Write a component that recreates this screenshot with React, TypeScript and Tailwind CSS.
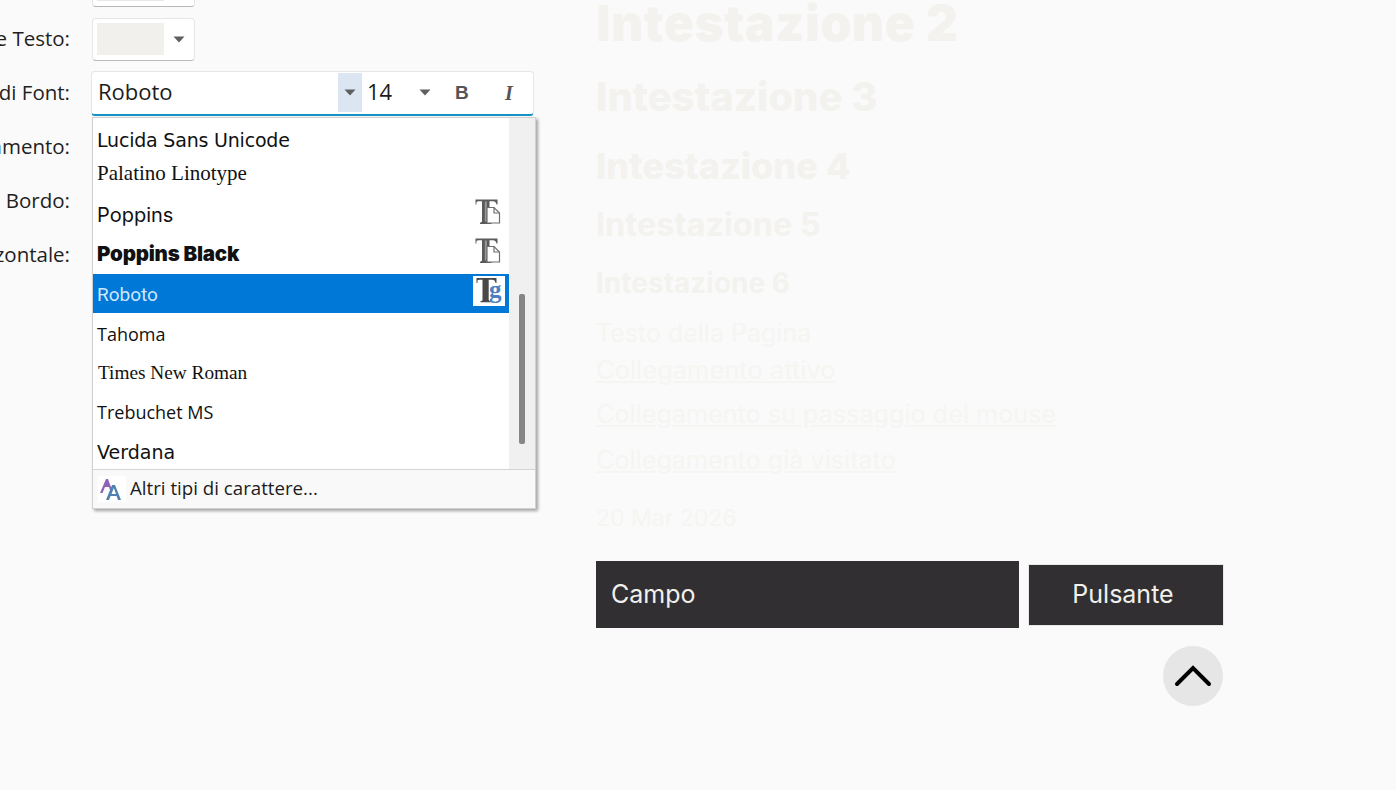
const Caret = () => (
  <svg width="12" height="7" viewBox="0 0 12 7" className="shrink-0">
    <path d="M0.5 0.5h11L6 6.5z" fill="#5f5f5f" />
  </svg>
);

// font type marks from the office font list
const OpenTypeIcon = () => (
  <svg width="28" height="28" viewBox="0 0 28 28" className="mb-[7px]">
    <path d="M1.500 1.500h22v5h-1c-.3-2-1.300-3.300-3.500-3.300h-3.500v20.300c0 .8.500 1.200 2 1.200v1.300H6v-1.300c1.500 0 2-.4 2-1.200V3.200H4.500C2.300 3.200 2.300 4.500 2.500 6.500h-1z" fill="#5a5a5a" />
    <path d="M10.800 3.500h2v20h-2z" fill="#9a9a9a" />
    <path d="M13 9.500h7l5.500 5.500v10H13z" fill="#fff" stroke="#6e6e6e" strokeWidth="1.200" />
    <path d="M20 9.500V15h5.500" fill="none" stroke="#6e6e6e" strokeWidth="1.200" />
  </svg>
);

const TrueTypeIcon = () => (
  <div className="w-[32px] h-[30px] mb-[6px] -mr-[3px] bg-white flex items-center justify-center">
    <svg width="28" height="27" viewBox="0 0 28 27">
      <path d="M1.500 1h20v5h-1c-.3-2-1.300-3.200-3.500-3.200h-3.300v20c0 .8.500 1.200 2 1.200v1.300H5.500V24c1.500 0 2-.4 2-1.200v-20H4.500C2.300 2.800 2.300 4 2.500 6h-1z" fill="#484848" />
      <text x="14" y="21" fontFamily="'Liberation Serif', serif" fontWeight="700" fontSize="25" fill="#4a7fc1">g</text>
    </svg>
  </div>
);

const MoreFontsIcon = () => (
  <svg width="28" height="26" viewBox="0 0 28 26">
    <rect width="28" height="26" fill="#fff" />
    <path d="M2 17L8 3h2l4 11h-2l-1-3H7l-2.500 6z" fill="#8e63b5" />
    <path d="M8 24l6-15h3l6 15h-3l-1.500-4h-6L11 24zm5.500-6h4.500l-2.200-6z" fill="#4f81b0" />
  </svg>
);

const Row = ({ label, children }: { label: string; children?: React.ReactNode }) => (
  <div className="h-[54px] flex items-center">
    <div className="w-[70px] pb-[2px] flex justify-end whitespace-nowrap text-[20.5px] text-[#1f1f1f] [font-family:'Open_Sans',sans-serif]">
      {label}
    </div>
    {children}
  </div>
);

const ColorSelect = ({ swatch }: { swatch: string }) => (
  <div className="ml-[22px] w-[103px] h-[43px] bg-white rounded-[4px] border border-[#e6e6e6] border-b-[#b8b8b8] flex items-center pl-1 pr-[9px] justify-between">
    <div className={`w-[67px] h-[32px] ${swatch}`}></div>
    <Caret />
  </div>
);

const FontItem = ({
  label,
  className,
  icon,
  selected,
}: {
  label: string;
  className: string;
  icon?: React.ReactNode;
  selected?: boolean;
}) => (
  <div className={`h-[39.2px] flex items-center justify-between pl-[4px] pr-[7px] ${selected ? 'bg-[#0078d7] text-[#cfe6fb]' : 'text-[#111]'}`}>
    <span className={className}>{label}</span>
    {icon}
  </div>
);

const App = () => {
  return (
    <div className="w-[1396px] h-[790px] overflow-hidden bg-[#fafafa] flex">
      {/* left: settings form */}
      <div className="w-[596px] shrink-0 -mt-[42px]">
        <Row label="Sfondo Testo:"><ColorSelect swatch="bg-[#e8e8e8]" /></Row>
        <Row label="Colore Testo:"><ColorSelect swatch="bg-[#f1f0ec]" /></Row>
        <Row label="Famiglia di Font:">
          <div className="relative ml-[21px] w-[443px] h-[45px] bg-white rounded-[4px] border border-[#e6e6e6] border-b-2 border-b-[#1593c6] flex items-center pl-[6px] text-[22px] text-[#1c1c1c] [font-family:'Open_Sans',sans-serif]">
            <span className="w-[240px] -mt-[2px]">Roboto</span>
            <div className="w-[24px] h-[39px] bg-[#dce6f2] flex items-center justify-center"><Caret /></div>
            <span className="ml-[5px] w-[52px] -mt-[2px]">14</span>
            <Caret />
            <span className="ml-[24px] w-[50px] mt-[1px] text-[19px] font-bold text-[#555] [font-family:'Liberation_Sans',sans-serif]">B</span>
            <span className="mt-[1px] text-[20px] font-bold italic text-[#555] [font-family:'Liberation_Serif',serif]">I</span>

            {/* open font list */}
            <div className="absolute left-0 top-[45px] w-[444px] h-[392px] bg-white border border-[#d0d0d0] shadow-[2px_2px_3px_rgba(0,0,0,0.35)] flex flex-col z-10">
              <div className="flex-1 flex min-h-0">
                <div className="w-[416px] text-[20px]">
                  <FontItem label="Lucida Sans Unicode" className="text-[19px] font-medium pt-[6px] tracking-[-0.2px] [font-family:'DejaVu_Sans',sans-serif]" />
                  <FontItem label="Palatino Linotype" className="text-[21px] pb-[6px] [font-family:'Liberation_Serif',serif]" />
                  <FontItem label="Poppins" className="text-[20px] [font-family:'Inter',sans-serif]" icon={<OpenTypeIcon />} />
                  <FontItem label="Poppins Black" className="text-[20.500px] font-black -mt-[1px] tracking-[-0.2px] [font-family:'Inter',sans-serif]" icon={<OpenTypeIcon />} />
                  <FontItem label="Roboto" className="text-[19px] pt-[2px] [font-family:'Roboto',sans-serif]" icon={<TrueTypeIcon />} selected />
                  <FontItem label="Tahoma" className="text-[18px] pt-[2px] [font-family:'Open_Sans',sans-serif]" />
                  <FontItem label="Times New Roman" className="text-[19.300px] pl-[1px] pt-[3px] [font-family:'Liberation_Serif',serif]" />
                  <FontItem label="Trebuchet MS" className="text-[18px] pt-[2px] [font-family:'Open_Sans',sans-serif]" />
                  <FontItem label="Verdana" className="text-[19px] pt-[3px] [font-family:'DejaVu_Sans',sans-serif]" />
                </div>
                <div className="flex-1 bg-[#f0f0f0] relative">
                  <div className="absolute left-[10px] top-[176px] w-[6px] h-[150px] rounded-[2px] bg-[#868686]"></div>
                </div>
              </div>
              <div className="h-[39px] shrink-0 bg-[#f9f9f9] border-t border-[#d4d4d4] flex items-center pl-[5px] gap-[4px] text-[18.700px] text-[#1c1c1c]">
                <MoreFontsIcon />
                <span>Altri tipi di carattere...</span>
              </div>
            </div>
          </div>
        </Row>
        <Row label="Allineamento:" />
        <Row label="Raggio Bordo:" />
        <Row label="Allineamento Orizzontale:" />
      </div>

      {/* right: theme preview */}
      <div className="flex-1 pt-[1px] flex flex-col items-start text-[#f3f2ee] [font-family:'Inter',sans-serif]">
        <div className="h-[44px] flex items-center text-[50px] font-black tracking-[0.4px] whitespace-nowrap">Intestazione 2</div>
        <div className="mt-[32px] h-[40px] flex items-center text-[40px] font-extrabold">Intestazione 3</div>
        <div className="mt-[30px] h-[38px] flex items-center text-[36px] font-extrabold">Intestazione 4</div>
        <div className="mt-[22px] h-[36px] flex items-center text-[32.500px] font-bold">Intestazione 5</div>
        <div className="mt-[25px] h-[30px] flex items-center text-[28px] font-bold">Intestazione 6</div>
        <div className="mt-[21px] h-[30px] flex items-center text-[25px] text-[#f5f5f1]">Testo della Pagina</div>
        <a className="mt-[6px] h-[30px] flex items-center text-[25.500px] text-[#f5f5f1] underline">Collegamento attivo</a>
        <a className="mt-[15px] h-[30px] flex items-center text-[25.200px] text-[#f5f5f1] underline">Collegamento su passaggio del mouse</a>
        <a className="mt-[16px] h-[30px] flex items-center text-[25.200px] text-[#f5f5f1] underline">Collegamento già visitato</a>
        <div className="mt-[27px] h-[30px] flex items-center text-[23px] text-[#f5f5f1]">20 Mar 2026</div>
        <div className="mt-[28px] w-[628px] flex items-center gap-[9px]">
          <div className="w-[423px] h-[67px] bg-[#312f32] flex items-center pl-[15px] text-[25px] text-[#f1f0ec]">Campo</div>
          <div className="w-[196px] h-[62px] bg-[#312f32] border border-[#e8e8e8] flex items-center justify-center pr-[6px] text-[25px] text-[#f1f0ec]">Pulsante</div>
        </div>
        <div className="mt-[18px] w-[627px] flex justify-end">
          <div className="w-[60px] h-[60px] rounded-full bg-[#e6e6e6] flex items-center justify-center">
            <svg width="38" height="24" viewBox="0 0 38 24" fill="none" stroke="#000" strokeWidth="4" strokeLinecap="round" strokeLinejoin="miter">
              <path d="M3 20L19 4l16 16" />
            </svg>
          </div>
        </div>
      </div>
    </div>
  );
};

export default App;
